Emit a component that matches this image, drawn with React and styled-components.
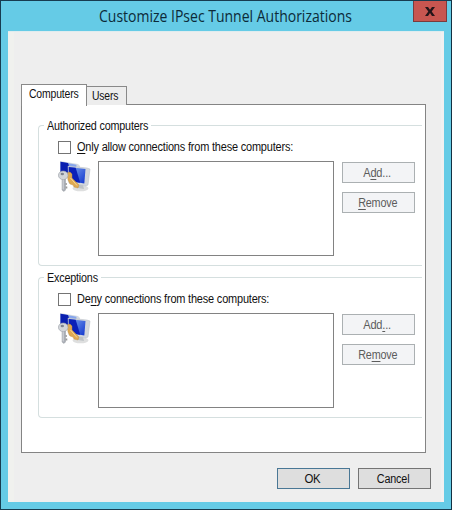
import React from "react";
import styled, { createGlobalStyle } from "styled-components";

const GlobalStyle = createGlobalStyle`
  *, *::before, *::after { box-sizing: border-box; }
  body { margin: 0; overflow: hidden; }
`;

const Dialog = styled.div`
  width: 452px;
  height: 510px;
  display: flex;
  flex-direction: column;
  padding: 0 7px 7px;
  background: #65cbe6;
  border: 1px solid #173c50;
  border-right-color: #123142;
  font: 12px/14px "Liberation Sans", Arial, sans-serif;
  color: #111;
`;

const TitleBar = styled.header`
  height: 30px;
  flex: none;
  display: flex;
  justify-content: flex-end;
  margin-right: -3px;
`;

const Title = styled.h1`
  flex: 1;
  min-width: 0;
  margin: 0;
  padding: 5px 0 0 91px;
  font: 400 15.5px/20px "Open Sans", "Noto Sans", sans-serif;
  white-space: nowrap;
  color: #0c2a38;
`;

const CloseButton = styled.button`
  width: 34px;
  height: 21px;
  padding: 0;
  display: grid;
  place-items: center;
  background: #c75650;
  border: 1px solid #7a3b3d;
  border-top: 0;
`;

const Body = styled.main`
  flex: 1;
  display: flex;
  flex-direction: column;
  padding: 52px 13px 0;
  background: #eeeeee;
  border-top: 1px solid #dfecef;
  box-shadow: inset 6px 0 0 #f0f1ee, inset -3px 0 0 #f1f0f1;
`;

const Tabs = styled.div`
  height: 21px;
  flex: none;
  display: flex;
  align-items: flex-start;
  margin-bottom: -1px;
`;

const Tab = styled.button`
  position: relative;
  width: ${(p) => p.$width}px;
  height: ${(p) => (p.$active ? 22 : 19)}px;
  margin: ${(p) => (p.$active ? "0 -1px 0 0" : "2px 0 0")};
  padding: ${(p) => (p.$active ? "0 0 4px 7px" : "0 0 0 5px")};
  z-index: ${(p) => (p.$active ? 1 : 0)};
  text-align: left;
  background: ${(p) => (p.$active ? "#fff" : "#ededed")};
  border: 1px solid #898989;
  border-bottom: 0;
  font: inherit;
  color: inherit;
  white-space: nowrap;
`;

const Panel = styled.section`
  width: 405px;
  height: 349px;
  display: flex;
  flex-direction: column;
  gap: 11px;
  padding: 20px 3px 0 16px;
  background: #fff;
  border: 1px solid #848484;
`;

const Group = styled.div`
  height: 141px;
  padding: 0 0 0 19px;
  border: 1px solid #d5dfdf;
  border-right: 0;
  border-radius: 4px 0 0 4px;
`;

const Legend = styled.h2`
  width: ${(p) => p.$width}px;
  height: 14px;
  margin: -7px 0 7px -14px;
  padding: 0 3px;
  background: #fff;
  font: inherit;
  white-space: nowrap;
`;

const CheckLabel = styled.label`
  display: flex;
  align-items: center;
  height: 14px;
  gap: 6px;
`;

const CheckBox = styled.span`
  width: 13px;
  height: 13px;
  flex: none;
  background: #fff;
  border: 1px solid #747474;
`;

const Controls = styled.div`
  display: flex;
  align-items: flex-start;
  margin-top: 7px;
`;

const IconSlot = styled.div`
  width: 40px;
  height: 36px;
`;

const List = styled.div`
  width: 236px;
  height: 95px;
  background: #fff;
  border: 1px solid #828282;
`;

const ButtonStack = styled.div`
  display: flex;
  flex-direction: column;
  gap: 9px;
  margin: 1px 0 0 8px;
`;

const Button = styled.button`
  width: 73px;
  height: 21px;
  padding: 0 2px 0 0;
  display: flex;
  align-items: center;
  justify-content: center;
  background: ${(p) => (p.$muted ? "#f3f4f6" : "#dedede")};
  border: 1px solid ${(p) => (p.$muted ? "#abb0b2" : p.$primary ? "#497795" : "#747474")};
  color: ${(p) => (p.$muted ? "#5c5c5c" : "#111")};
  font: inherit;
`;

const Footer = styled.footer`
  display: flex;
  justify-content: flex-end;
  gap: 8px;
  margin-top: 15px;
`;

const Text = styled.span`
  display: inline-block;
  letter-spacing: ${(p) => p.$spacing ?? -0.2}px;
  transform: scaleX(${(p) => p.$condense});
  transform-origin: ${(p) => (p.$centered ? "center" : "left")};
  white-space: pre;
  u { text-underline-offset: 2px; text-decoration-thickness: 1px; text-decoration-skip-ink: none; }
`;

function ComputersIcon() {
  return (
    <svg width="36" height="36" viewBox="0 0 36 36">
      <defs>
        <linearGradient id="glass" x1="0" y1="0" x2="1" y2=".8">
          <stop offset="0" stopColor="#8fb0f2" />
          <stop offset=".35" stopColor="#5e86e6" />
          <stop offset="1" stopColor="#1a3fd0" />
        </linearGradient>
      </defs>
      <path d="M2 0 20 3l2 2-1 11-15-1-4-2Z" fill="#d5dae1" />
      <path d="m2.5.7 16 3-1 10-15-1Z" fill="#86a5ec" />
      <path d="M2.5.7 10 2l4 11-11.5-.5Z" fill="#0a1fb0" />
      <ellipse cx="22.5" cy="27.3" rx="8" ry="3" fill="#dedfdf" />
      <path d="m19 23 6 1 1 4-6-1Z" fill="#bfc3c6" />
      <path d="m10 5 19 2 3 1-2 16-2 1-17-3Z" fill="#d3d7dc" stroke="#b6bcc4" strokeWidth=".5" />
      <path d="m10.7 6 16.8 2-1.2 14.5-15-2.5Z" fill="url(#glass)" />
      <path d="m10.7 6 7 .8 4.5 15-10.9-1.8Z" fill="#0b20b8" />
      <path d="m9 12 3-1 2 2v4l7 7-1 3-4-1-1-2-3-1-2-4Z" fill="#dfa952" stroke="#c18a3c" strokeWidth=".4" />
      <path d="m12.5 17 6.5 7.5" stroke="#f6d593" strokeWidth="1" />
      <path d="M4 17h3.5v12L6 30.5 4 29Z" fill="#a9adb5" stroke="#888d96" strokeWidth=".4" />
      <path d="M7.5 22h1.3v2H7.5m0 1.5h1.8v2H7.5" fill="#999" />
      <ellipse cx="5.2" cy="14.3" rx="4.8" ry="4.3" fill="#d3d6da" stroke="#989da6" strokeWidth=".6" />
      <ellipse cx="4.3" cy="13" rx="1.7" ry="1.2" fill="#7e848f" />
      <path d="M5.1 18.5v10" stroke="#e9eaed" strokeWidth=".8" />
    </svg>
  );
}

function ComputerGroup({ title, titleWidth, label, condense, addLabel, removeLabel }) {
  return (
    <Group>
      <Legend $width={titleWidth}><Text $condense={0.897}>{title}</Text></Legend>
      <CheckLabel><CheckBox /><Text $condense={condense}>{label}</Text></CheckLabel>
      <Controls>
        <IconSlot><ComputersIcon /></IconSlot>
        <List />
        <ButtonStack>
          <Button $muted><Text $centered $condense={0.92}>{addLabel}</Text></Button>
          <Button $muted><Text $centered $condense={0.9}>{removeLabel}</Text></Button>
        </ButtonStack>
      </Controls>
    </Group>
  );
}

export default function App() {
  return (
    <>
      <GlobalStyle />
      <Dialog>
        <TitleBar>
          <Title><Text $spacing={0} $condense={0.903}>Customize IPsec Tunnel Authorizations</Text></Title>
          <CloseButton aria-label="Close">
            <svg width="10" height="9" viewBox="0 0 10 9">
              <path d="M0 0h3l2 2.7L7 0h3L6.7 4.4 10 9H7L5 6.1 3 9H0l3.3-4.6Z" fill="#241519" />
            </svg>
          </CloseButton>
        </TitleBar>
        <Body>
          <Tabs>
            <Tab $active $width={66}><Text $condense={0.87}>Computers</Text></Tab>
            <Tab $width={41}><Text $condense={0.865}>Users</Text></Tab>
          </Tabs>
          <Panel>
            <ComputerGroup
              title="Authorized computers" titleWidth={107}
              label={<><u>O</u>nly allow connections from these computers:</>} condense={0.913}
              addLabel={<>A<u>d</u>d...</>} removeLabel={<><u>R</u>emove</>}
            />
            <ComputerGroup
              title="Exceptions" titleWidth={57}
              label={<>De<u>n</u>y connections from these computers:</>} condense={0.913}
              addLabel={<>Add<u>.</u>..</>} removeLabel={<>Re<u>m</u>ove</>}
            />
          </Panel>
          <Footer>
            <Button $primary><Text $centered $condense={0.95}>OK</Text></Button>
            <Button><Text $centered $condense={0.9}>Cancel</Text></Button>
          </Footer>
        </Body>
      </Dialog>
    </>
  );
}
